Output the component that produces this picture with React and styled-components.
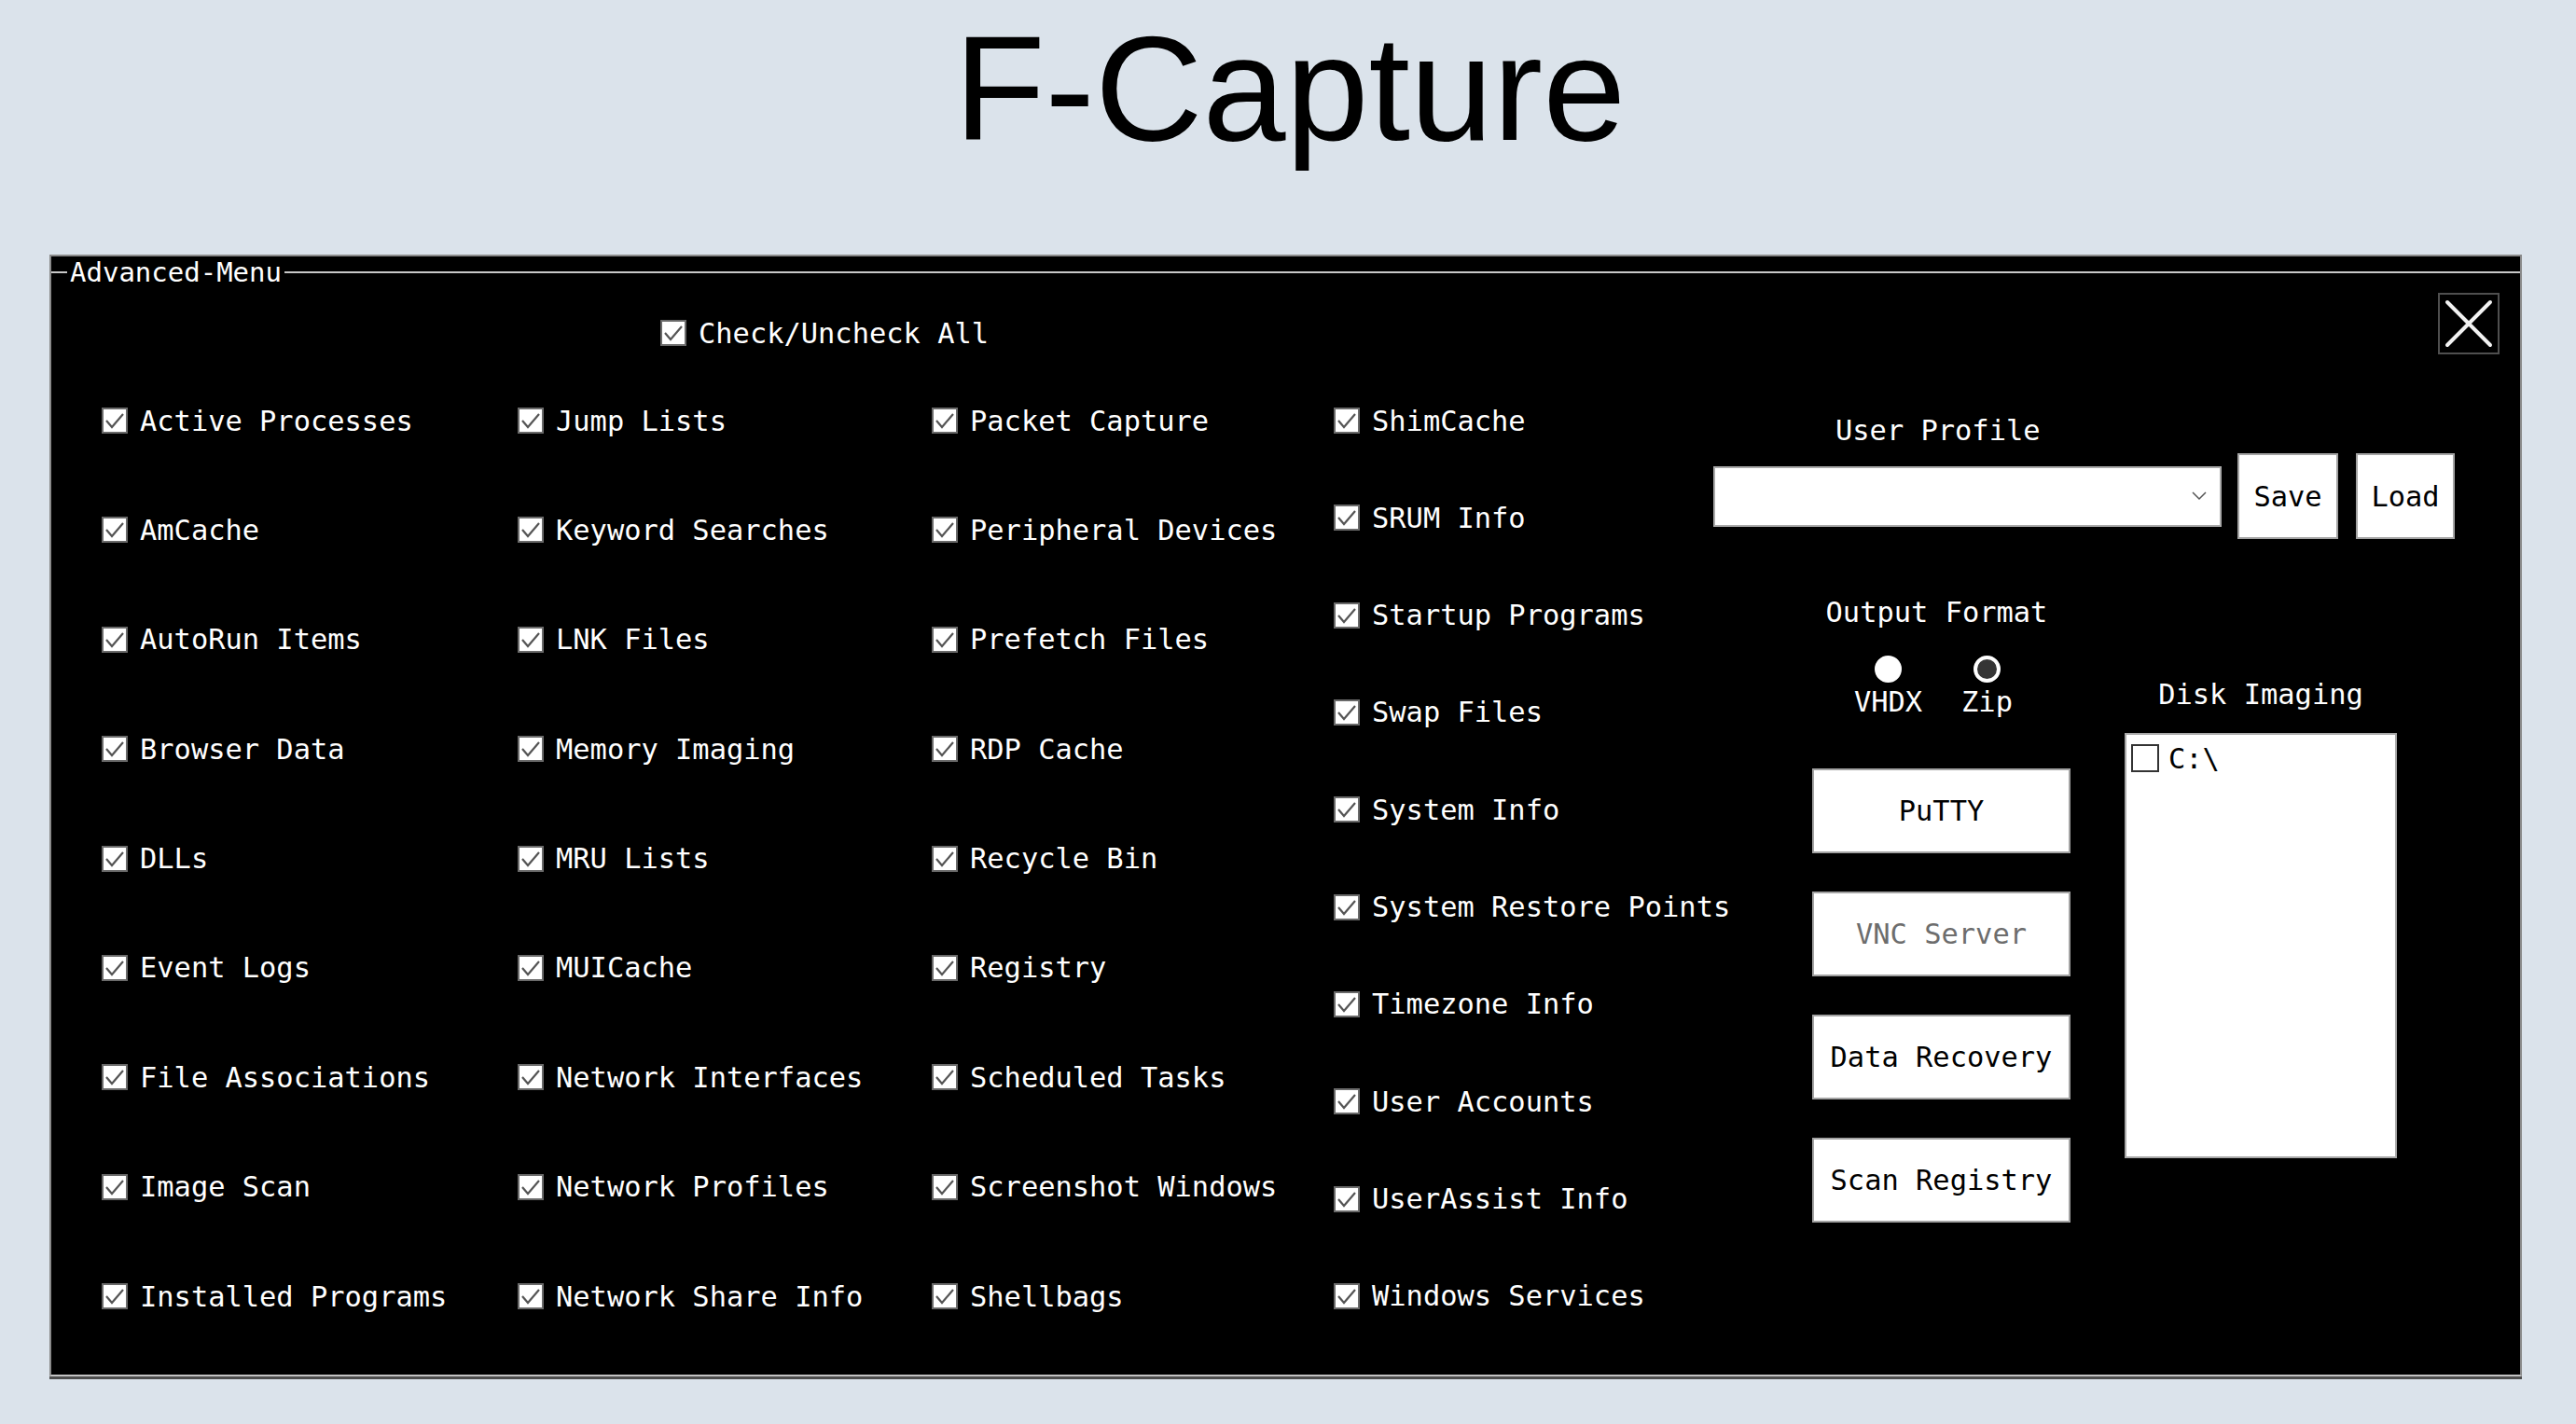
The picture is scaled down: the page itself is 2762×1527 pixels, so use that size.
import styled, { createGlobalStyle } from 'styled-components'

const GlobalStyle = createGlobalStyle`
  html, body {
    margin: 0;
    padding: 0;
    background: #dbe3eb;
  }
`

const Page = styled.div`
  width: 2762px;
  height: 1527px;
  overflow: hidden;
  background: #dbe3eb;
  font-family: "DejaVu Sans Mono", "Liberation Mono", monospace;
  font-size: 30.4px;
`

const Title = styled.h1`
  margin: 0;
  height: 273px;
  box-sizing: border-box;
  padding: 15px 0 0 4px;
  font-family: "Liberation Sans", Arial, sans-serif;
  font-size: 160px;
  line-height: 160px;
  font-weight: 400;
  text-align: center;
  color: #000;
`

const Panel = styled.div`
  margin-left: 53px;
  width: 2651px;
  height: 1203px;
  box-sizing: border-box;
  background: #000;
  border: 2px solid #8a8a8a;
  border-bottom-color: #c4c4c4;
  box-shadow: 0 3px 0 #4d4d4d;
  color: #fff;
`

const Group = styled.fieldset`
  margin: 0;
  padding: 0 22px 0 0;
  min-width: 0;
  height: 100%;
  box-sizing: border-box;
  border: none;
  border-top: 2px solid #c8c8c8;
`

const Legend = styled.legend`
  margin-left: 17px;
  padding: 0 3px;
  font-size: 29px;
  line-height: 34px;
  color: #fff;
`

const TopRow = styled.div`
  display: flex;
  align-items: flex-start;
  padding-top: 5px;
`

const Item = styled.label`
  display: flex;
  align-items: center;
  gap: ${p => p.gap || 13}px;
  height: 40px;
  white-space: nowrap;
  color: ${p => p.dark ? '#000' : '#fff'};
`

const CheckAll = styled(Item)`
  margin-left: 653px;
  margin-top: 23px;
`

const Box = styled.span`
  display: inline-flex;
  align-items: center;
  justify-content: center;
  flex: none;
  width: ${p => p.size || 28}px;
  height: ${p => p.size || 28}px;
  box-sizing: border-box;
  background: #fff;
  border: 2px solid ${p => p.border || '#6a6a6a'};
`

const CloseButton = styled.button`
  margin-left: auto;
  width: 66px;
  height: 66px;
  padding: 0;
  display: flex;
  align-items: center;
  justify-content: center;
  background: #000;
  border: 2px solid #4f4f4f;
`

const Body = styled.div`
  display: flex;
  margin-top: 51px;
  padding-left: 54px;
`

const Columns = styled.div`
  display: grid;
  grid-template-columns: 446px 444px 431px 407px;
  height: 979px;
`

const Column = styled.div`
  display: flex;
  flex-direction: column;
  justify-content: space-between;
`

const Side = styled.div`
  display: flex;
  flex-direction: column;
  width: 795px;
`

const SideLabel = styled.div`
  line-height: 36px;
  white-space: nowrap;
  text-align: ${p => p.align || 'center'};
  padding-left: ${p => p.indent || 0}px;
  padding-right: ${p => p.trail || 0}px;
  margin-top: ${p => p.top || 0}px;
`

const ProfileRow = styled.div`
  display: flex;
  align-items: center;
  margin-top: 6px;
`

const Combo = styled.div`
  width: 545px;
  height: 65px;
  box-sizing: border-box;
  background: #fff;
  border: 2px solid #a9a9a9;
  display: flex;
  align-items: center;
  justify-content: flex-end;
  padding-right: 14px;
`

const Button = styled.button`
  width: ${p => p.w || 277}px;
  height: ${p => p.h || 91}px;
  margin-left: ${p => p.ml || 0}px;
  padding: 0;
  box-sizing: border-box;
  background: #fff;
  border: 2px solid #a3a3a3;
  font-family: "DejaVu Sans Mono", "Liberation Mono", monospace;
  font-size: 30.4px;
  color: ${p => p.disabled ? '#6d6d6d' : '#000'};
`

const Lower = styled.div`
  display: flex;
`

const FormatCol = styled.div`
  display: flex;
  flex-direction: column;
  margin-left: 106px;
  width: 277px;
`

const RadioRow = styled.div`
  display: flex;
  justify-content: center;
  gap: 26px;
  margin-top: 28px;
  padding-right: 8px;
`

const RadioOption = styled.div`
  display: flex;
  flex-direction: column;
  align-items: center;
  width: 80px;
`

const Dot = styled.span`
  width: 29px;
  height: 29px;
  box-sizing: border-box;
  border-radius: 50%;
  background: ${p => p.filled ? '#fff' : '#353535'};
  border: 4px solid #fff;
`

const RadioText = styled.span`
  margin-top: 3px;
  line-height: 36px;
`

const ButtonStack = styled.div`
  display: flex;
  flex-direction: column;
  gap: 41px;
  margin-top: 53px;
`

const DiskCol = styled.div`
  display: flex;
  flex-direction: column;
  margin-left: 58px;
  width: 292px;
`

const ListBox = styled.div`
  margin-top: 23px;
  height: 456px;
  box-sizing: border-box;
  background: #fff;
  border: 2px solid #a9a9a9;
  padding: 5px 0 0 5px;
`

const Check = () => (
  <svg width="24" height="24" viewBox="0 0 24 24">
    <polyline points="3,12 9,19 21,5" fill="none" stroke="#555" strokeWidth="2.2" />
  </svg>
)

const CheckItem = ({ label }) => (
  <Item>
    <Box><Check /></Box>
    {label}
  </Item>
)

const columns = [
  ['Active Processes', 'AmCache', 'AutoRun Items', 'Browser Data', 'DLLs', 'Event Logs', 'File Associations', 'Image Scan', 'Installed Programs'],
  ['Jump Lists', 'Keyword Searches', 'LNK Files', 'Memory Imaging', 'MRU Lists', 'MUICache', 'Network Interfaces', 'Network Profiles', 'Network Share Info'],
  ['Packet Capture', 'Peripheral Devices', 'Prefetch Files', 'RDP Cache', 'Recycle Bin', 'Registry', 'Scheduled Tasks', 'Screenshot Windows', 'Shellbags'],
  ['ShimCache', 'SRUM Info', 'Startup Programs', 'Swap Files', 'System Info', 'System Restore Points', 'Timezone Info', 'User Accounts', 'UserAssist Info', 'Windows Services'],
]

const App = () => {
  return (
    <Page>
      <GlobalStyle />
      <Title>F-Capture</Title>
      <Panel>
        <Group>
          <Legend>Advanced-Menu</Legend>
          <TopRow>
            <CheckAll>
              <Box><Check /></Box>
              Check/Uncheck All
            </CheckAll>
            <CloseButton>
              <svg width="62" height="62" viewBox="0 0 62 62">
                <path d="M8 8 L54 54 M54 8 L8 54" stroke="#f2f2f2" strokeWidth="4" strokeLinecap="round" />
              </svg>
            </CloseButton>
          </TopRow>
          <Body>
            <Columns>
              {columns.map((col, i) => (
                <Column key={i}>
                  {col.map(label => <CheckItem key={label} label={label} />)}
                </Column>
              ))}
            </Columns>
            <Side>
              <SideLabel align="left" indent={131} top={13}>User Profile</SideLabel>
              <ProfileRow>
                <Combo>
                  <svg width="16" height="10" viewBox="0 0 16 10">
                    <polyline points="1,1 8,8 15,1" fill="none" stroke="#555" strokeWidth="1.5" />
                  </svg>
                </Combo>
                <Button w={108} h={92} ml={17}>Save</Button>
                <Button w={106} h={92} ml={19}>Load</Button>
              </ProfileRow>
              <Lower>
                <FormatCol>
                  <SideLabel top={61} trail={10}>Output Format</SideLabel>
                  <RadioRow>
                    <RadioOption>
                      <Dot filled />
                      <RadioText>VHDX</RadioText>
                    </RadioOption>
                    <RadioOption>
                      <Dot />
                      <RadioText>Zip</RadioText>
                    </RadioOption>
                  </RadioRow>
                  <ButtonStack>
                    <Button>PuTTY</Button>
                    <Button disabled>VNC Server</Button>
                    <Button>Data Recovery</Button>
                    <Button>Scan Registry</Button>
                  </ButtonStack>
                </FormatCol>
                <DiskCol>
                  <SideLabel top={149}>Disk Imaging</SideLabel>
                  <ListBox>
                    <Item dark gap={10}>
                      <Box size={30} border="#333" />
                      C:\
                    </Item>
                  </ListBox>
                </DiskCol>
              </Lower>
            </Side>
          </Body>
        </Group>
      </Panel>
    </Page>
  )
}

export default App
